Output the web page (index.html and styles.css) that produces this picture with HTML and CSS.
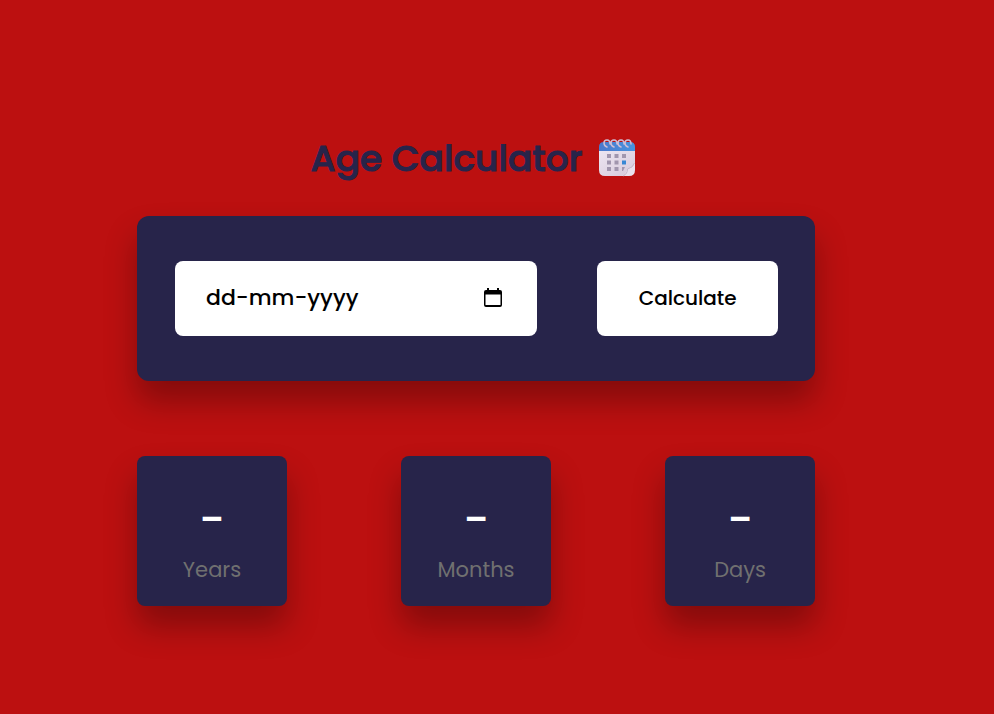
FILE: index.html
```html
<!DOCTYPE html>
<html lang="en">
<head>
<meta charset="utf-8">
<meta name="viewport" content="width=device-width, initial-scale=1">
<title>Age Calculator</title>
<link rel="stylesheet" href="styles.css">
</head>
<body>
<main class="container">
  <h1 class="title">Age Calculator
    <svg class="title-icon" viewBox="0 0 40 40" aria-hidden="true">
      <defs>
        <linearGradient id="sheet" x1="0" y1="0" x2="1" y2="1">
          <stop offset="0" stop-color="#eee6f2"/>
          <stop offset="1" stop-color="#d5c9da"/>
        </linearGradient>
        <linearGradient id="header" x1="0" y1="0" x2="1" y2="0">
          <stop offset="0" stop-color="#4b78cc"/>
          <stop offset="1" stop-color="#4794df"/>
        </linearGradient>
      </defs>
      <path d="M2 12h36v14L26 38H8q-6 0-6-6z" fill="url(#sheet)"/>
      <path d="M2 13V9q0-5 5-5h26q5 0 5 5v4z" fill="url(#header)"/>
      <path d="M38 24v8q0 6-6 6h-7q4-2 5-7 6-1 8-7z" fill="#e9e1ed"/>
      <path d="M37.500 25q-2 5-7 6 0 5-4.500 7" fill="none" stroke="#c3b8ca" stroke-width="1"/>
      <g fill="#a196ae">
        <path d="M10 16h4v4h-4zM17.500 16h4v4h-4zM25 16h4v4h-4zM10 22.500h4v4h-4zM17.500 22.500h4v4h-4zM10 29h4v4h-4zM17.500 29h4v4h-4zM25 29h3l-2 4h-1z"/>
      </g>
      <path d="M25 22.500h4v4h-4z" fill="#3988d5"/>
      <g fill="none" stroke="#cfbdd3" stroke-width="1.500" stroke-linecap="round">
        <path d="M10 9Q7 8 7 5t3-3q3 0 3 4M17 9q-3-1-3-4t3-3q3 0 3 4M24 9q-3-1-3-4t3-3q3 0 3 4M31 9q-3-1-3-4t3-3q3 0 3 4"/>
      </g>
    </svg>
  </h1>

  <form class="panel">
    <div class="date-field">
      <input class="date-input" type="text" placeholder="dd-mm-yyyy" aria-label="Date of birth">
      <button class="picker" type="button" aria-label="Open calendar">
        <svg viewBox="0 0 18 20" aria-hidden="true">
          <path d="M3 0h2v2h8V0h2v2h1q2 0 2 2v13q0 2-2 2H2q-2 0-2-2V4q0-2 2-2h1zM1.500 6.500v10.500h15V6.500z" fill="#000" fill-rule="evenodd"/>
        </svg>
      </button>
    </div>
    <button class="calculate" type="button">Calculate</button>
  </form>

  <section class="results" aria-label="Result">
    <div class="result"><span class="value">-</span><span class="unit">Years</span></div>
    <div class="result"><span class="value">-</span><span class="unit">Months</span></div>
    <div class="result"><span class="value">-</span><span class="unit">Days</span></div>
  </section>
</main>
</body>
</html>
```
FILE: styles.css
```css
* {
  box-sizing: border-box;
  margin: 0;
  padding: 0;
}

body {
  background: #bc1010;
  font-family: Poppins, Inter, sans-serif;
}

.container {
  margin: 128px 18% 64px 137px;
}

.title {
  display: flex;
  justify-content: center;
  align-items: center;
  gap: 15px;
  height: 60px;
  padding-right: 4px;
  color: #27244a;
  font-size: 36px;
  font-weight: 500;
  -webkit-text-stroke: 1px #27244a;
}

.title-icon {
  width: 40px;
  height: 40px;
}

.panel,
.result {
  background: #27244a;
  box-shadow: 0 20px 32px rgba(0, 0, 0, 0.3);
}

.panel {
  display: flex;
  justify-content: space-between;
  margin-top: 28px;
  padding: 45px 37px 45px 38px;
  border-radius: 12px;
}

.date-field,
.calculate {
  height: 75px;
  border-radius: 8px;
  background: #fff;
}

.date-field {
  display: flex;
  align-items: center;
  width: 60%;
  padding: 0 35px 2px 31px;
}

.date-input {
  flex: 1;
  min-width: 0;
  border: 0;
  outline: 0;
  background: transparent;
  color: #000;
  font: 500 22px Poppins, Inter, sans-serif;
}

.date-input::placeholder {
  color: #000;
  opacity: 1;
}

.picker {
  display: flex;
  border: 0;
  background: transparent;
}

.picker svg {
  width: 18px;
  height: 20px;
}

.calculate {
  width: 30%;
  padding-bottom: 2px;
  border: 0;
  color: #000;
  font: 500 20px Poppins, Inter, sans-serif;
}

.results {
  display: flex;
  justify-content: space-between;
  margin-top: 75px;
}

.result {
  display: flex;
  flex-direction: column;
  align-items: center;
  width: 150px;
  height: 150px;
  padding-top: 32px;
  border-radius: 8px;
}

.value {
  color: #fff;
  font-size: 45px;
  font-weight: 500;
  line-height: 64px;
}

.unit {
  color: #707070;
  font-size: 21px;
  font-weight: 400;
  line-height: 36px;
}
```
